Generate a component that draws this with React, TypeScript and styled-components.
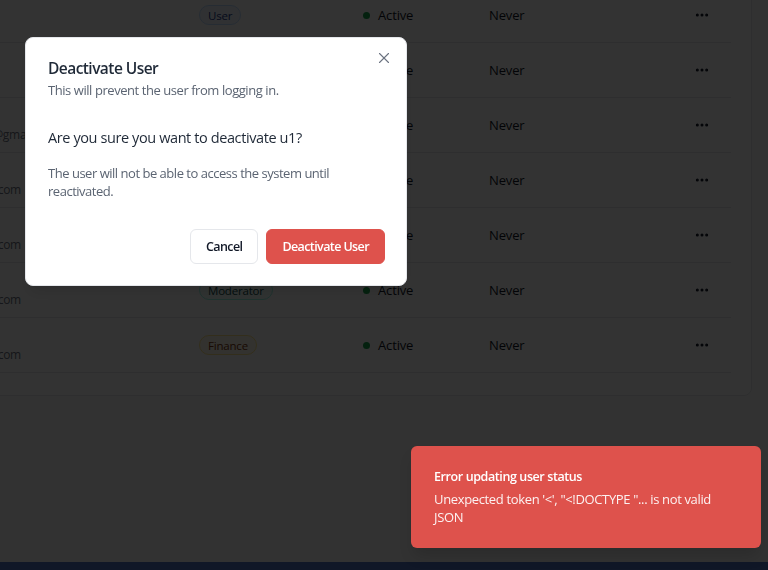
import React from 'react';
import styled, { createGlobalStyle } from 'styled-components';
import { X, MoreHorizontal } from 'lucide-react';

const Global = createGlobalStyle`
  html, body { margin: 0; padding: 0; }
  body {
    font-family: "Open Sans", "Noto Sans", "DejaVu Sans", sans-serif;
    background: #f9fafb;
    overflow: hidden;
    color: #111827;
  }
  * { box-sizing: border-box; }
`;

const Page = styled.div`
  height: 570px;
  display: flex;
  flex-direction: column;
  overflow: hidden;
`;

const Main = styled.main`
  flex: 1;
  min-height: 0;
  display: flex;
  justify-content: flex-end;
  align-items: flex-start;
  padding-right: 16px;
  overflow: hidden;
  background: #f9fafb;
`;

const Footer = styled.footer`
  height: 8px;
  flex: none;
  background: #101727;
  position: relative;
  z-index: 60;
`;

const Card = styled.section`
  flex: none;
  width: 852px;
  margin-top: -13px;
  background: #ffffff;
  border: 1px solid #e5e7eb;
  border-radius: 8px;
  padding: 0 20px 22px 24px;
`;

const Row = styled.div`
  display: grid;
  grid-template-columns: 1fr 167px 123px 184px 58px;
  align-items: center;
  height: 55px;
  border-bottom: 1px solid #e5e7eb;
`;

const UserCell = styled.div`
  display: flex;
  flex-direction: column;
  gap: 1px;
  white-space: nowrap;
`;

const Name = styled.span`
  font-size: 13px;
  font-weight: 500;
  line-height: 19px;
  letter-spacing: -0.3px;
  color: #111827;
`;

const Email = styled.span`
  font-size: 12px;
  line-height: 16px;
  letter-spacing: -0.3px;
  color: #6b7280;
`;

const badgeTones = {
  user: { bg: '#eff6ff', border: '#bfdbfe', fg: '#1e3a8a' },
  moderator: { bg: '#f0fdfa', border: '#99f6e4', fg: '#134e4a' },
  finance: { bg: '#fffbeb', border: '#fde68a', fg: '#78350f' },
} as const;

type Tone = keyof typeof badgeTones;

const Badge = styled.span<{ $tone: Tone }>`
  justify-self: start;
  display: inline-flex;
  align-items: center;
  height: 20px;
  padding: 0 8px;
  border-radius: 9999px;
  font-size: 11.5px;
  font-weight: 500;
  letter-spacing: -0.2px;
  background: ${(p) => badgeTones[p.$tone].bg};
  border: 1px solid ${(p) => badgeTones[p.$tone].border};
  color: ${(p) => badgeTones[p.$tone].fg};
`;

const Status = styled.span`
  display: flex;
  align-items: center;
  gap: 8px;
  font-size: 13px;
  letter-spacing: -0.15px;
  color: #111827;
`;

const Dot = styled.span`
  width: 7px;
  height: 7px;
  border-radius: 50%;
  background: #16a34a;
  margin-left: -3px;
`;

const Muted = styled.span`
  font-size: 13px;
  letter-spacing: -0.15px;
  color: #111827;
`;

const IconButton = styled.button`
  justify-self: center;
  display: flex;
  align-items: center;
  justify-content: center;
  width: 32px;
  height: 32px;
  padding: 0;
  border: 0;
  background: transparent;
  color: #111827;
`;

const Overlay = styled.div`
  position: fixed;
  left: 0;
  right: 0;
  top: 0;
  bottom: 8px;
  background: rgba(0, 0, 0, 0.8);
  z-index: 50;
`;

const Dialog = styled.div`
  position: fixed;
  left: 25px;
  top: 37px;
  width: 382px;
  height: 249px;
  z-index: 55;
  background: #ffffff;
  border: 1px solid #e5e7eb;
  border-radius: 8px;
  box-shadow: 0 10px 15px -3px rgba(0,0,0,0.1), 0 4px 6px -4px rgba(0,0,0,0.1);
  padding: 18px 21px 21px 22px;
  display: flex;
  flex-direction: column;
`;

const CloseButton = styled.button`
  position: absolute;
  top: 10px;
  right: 12px;
  width: 20px;
  height: 20px;
  padding: 0;
  border: 0;
  background: transparent;
  color: #6b7280;
  display: flex;
  align-items: center;
  justify-content: center;
`;

const Header = styled.div`
  display: flex;
  flex-direction: column;
`;

const Title = styled.h2`
  margin: 0;
  font-size: 15.5px;
  font-weight: 600;
  line-height: 24px;
  letter-spacing: -0.55px;
  color: #1f2937;
`;

const Description = styled.p`
  margin: 0;
  font-size: 13px;
  line-height: 20px;
  letter-spacing: -0.44px;
  color: #5b6472;
`;

const Question = styled.p`
  margin: 27px 0 0;
  font-size: 14.5px;
  line-height: 22px;
  letter-spacing: -0.4px;
  color: #1f2937;
`;

const Note = styled.p`
  margin: 15px 0 0;
  font-size: 13px;
  line-height: 18px;
  letter-spacing: -0.48px;
  color: #5b6472;
`;

const Actions = styled.div`
  margin-top: auto;
  display: flex;
  justify-content: flex-end;
  gap: 8px;
`;

const Button = styled.button<{ $variant: 'outline' | 'destructive' }>`
  height: 35px;
  padding: 0 15px;
  border-radius: 6px;
  font-family: inherit;
  font-size: 12.5px;
  font-weight: 600;
  letter-spacing: -0.6px;
  cursor: pointer;
  border: 1px solid ${(p) => (p.$variant === 'outline' ? '#e5e7eb' : '#de524c')};
  background: ${(p) => (p.$variant === 'outline' ? '#ffffff' : '#de524c')};
  color: ${(p) => (p.$variant === 'outline' ? '#111827' : '#ffffff')};
`;

const Toast = styled.div`
  position: fixed;
  right: 7px;
  bottom: 22px;
  width: 350px;
  height: 102px;
  z-index: 70;
  background: #de524c;
  border-radius: 6px;
  padding: 21px 44px 20px 23px;
  display: flex;
  flex-direction: column;
  gap: 3px;
  color: #ffffff;
  box-shadow: 0 10px 15px -3px rgba(0,0,0,0.15);
`;

const ToastTitle = styled.div`
  font-size: 12.5px;
  font-weight: 600;
  line-height: 20px;
  letter-spacing: -0.4px;
`;

const ToastText = styled.div`
  font-size: 13px;
  line-height: 18px;
  letter-spacing: -0.35px;
  opacity: 0.92;
`;

type U = { name: string; email: string; role: string; tone: Tone };

const users: U[] = [
  { name: 'Admin', email: 'a@acme.io', role: 'User', tone: 'user' },
  { name: 'u1', email: 'u1@x.com', role: 'User', tone: 'user' },
  { name: 'Jessica', email: 'jessica.smith@gmail.com', role: 'User', tone: 'user' },
  { name: 'u2', email: 'u2@example.com', role: 'User', tone: 'user' },
  { name: 'u3', email: 'u3@example.com', role: 'User', tone: 'user' },
  { name: 'u4', email: 'u4@example.com', role: 'Moderator', tone: 'moderator' },
  { name: 'u5', email: 'u5@example.com', role: 'Finance', tone: 'finance' },
];

export default function App() {
  return (
    <>
      <Global />
      <Page>
        <Main>
          <Card>
            {users.map((u) => (
              <Row key={u.email}>
                <UserCell>
                  <Name>{u.name}</Name>
                  <Email>{u.email}</Email>
                </UserCell>
                <Badge $tone={u.tone}>{u.role}</Badge>
                <Status>
                  <Dot />
                  Active
                </Status>
                <Muted>Never</Muted>
                <IconButton aria-label="Actions">
                  <MoreHorizontal size={16} strokeWidth={2.5} />
                </IconButton>
              </Row>
            ))}
          </Card>
        </Main>
        <Footer />
      </Page>
      <Overlay />
      <Dialog role="dialog">
        <CloseButton aria-label="Close">
          <X size={18} strokeWidth={1.5} />
        </CloseButton>
        <Header>
          <Title>Deactivate User</Title>
          <Description>This will prevent the user from logging in.</Description>
        </Header>
        <Question>Are you sure you want to deactivate u1?</Question>
        <Note>The user will not be able to access the system until reactivated.</Note>
        <Actions>
          <Button $variant="outline">Cancel</Button>
          <Button $variant="destructive">Deactivate User</Button>
        </Actions>
      </Dialog>
      <Toast role="status">
        <ToastTitle>Error updating user status</ToastTitle>
        <ToastText>Unexpected token '&lt;', "&lt;!DOCTYPE "... is not valid JSON</ToastText>
      </Toast>
    </>
  );
}
